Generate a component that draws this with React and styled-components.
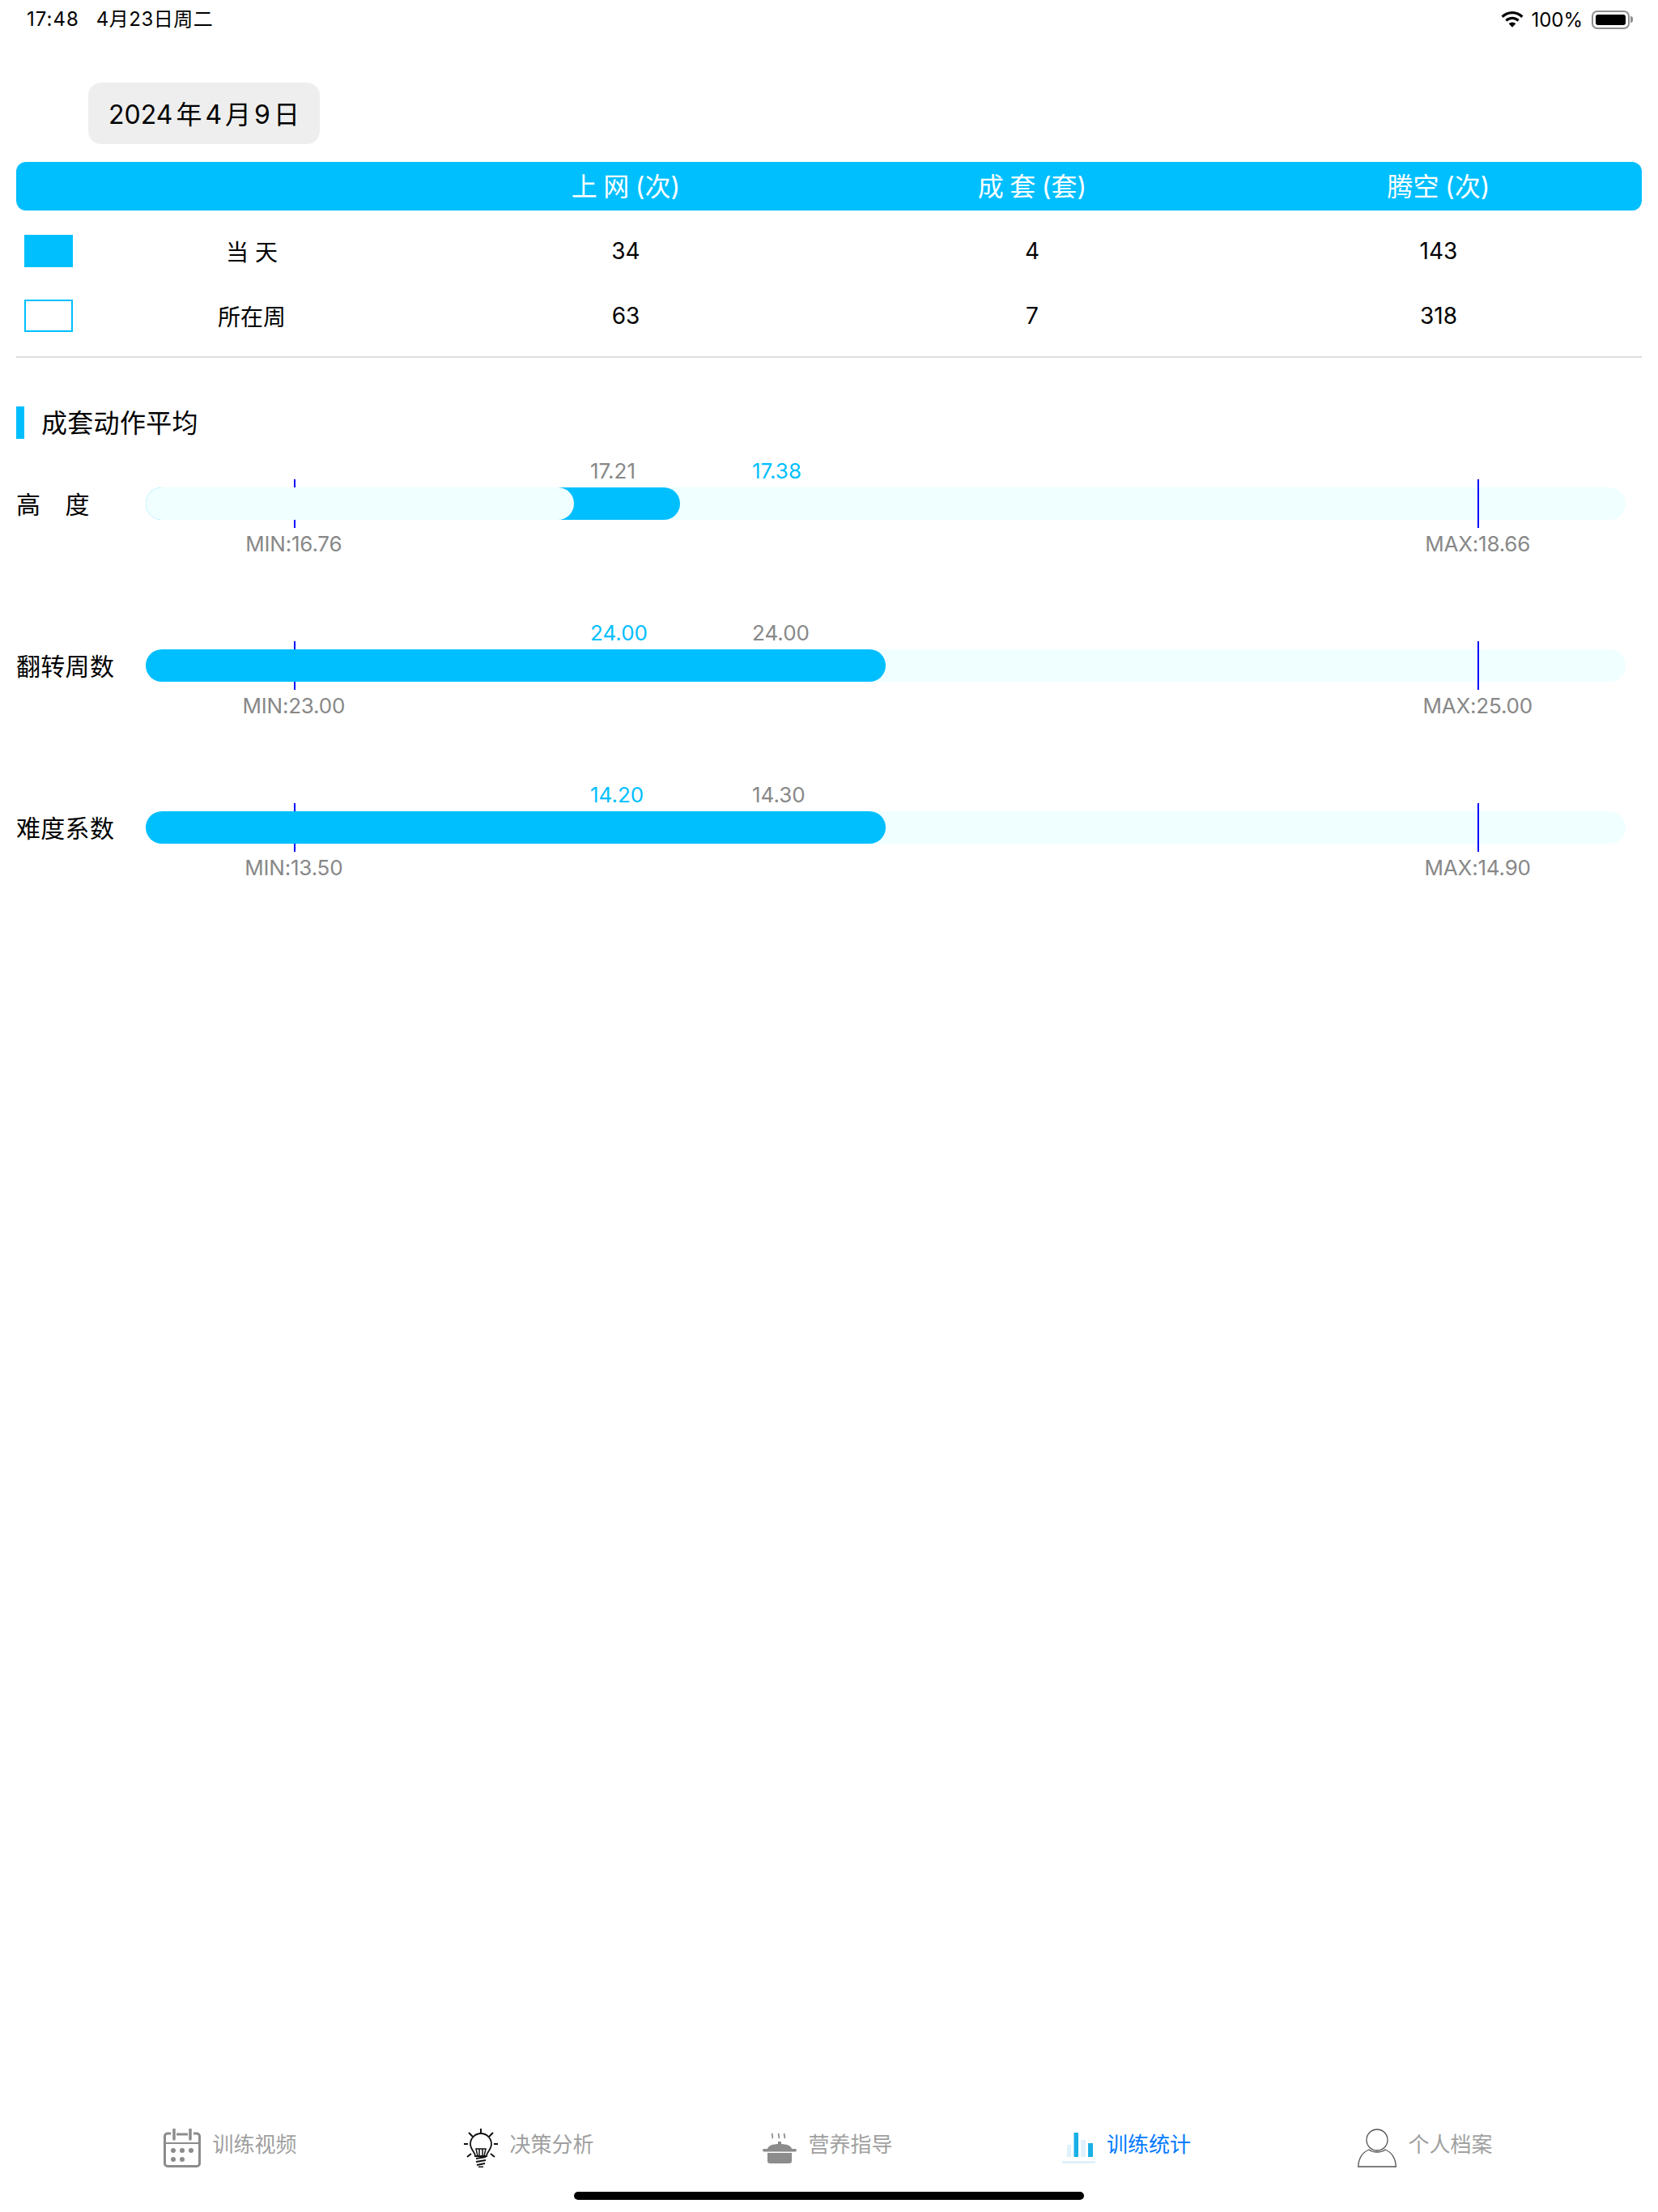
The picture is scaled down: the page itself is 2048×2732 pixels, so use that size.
import React from 'react'
import styled, { createGlobalStyle } from 'styled-components'

const SKY = '#00BFFF'
const FONT = 'Inter, "Noto Sans CJK SC", sans-serif'

const stats = [
  { key: 'day', label: '当 天', values: ['34', '4', '143'], filled: true },
  { key: 'week', label: '所在周', values: ['63', '7', '318'], filled: false },
]

const metrics = [
  { name: '高　度', day: 17.38, week: 17.21, min: 16.76, max: 18.66 },
  { name: '翻转周数', day: 24, week: 24, min: 23, max: 25 },
  { name: '难度系数', day: 14.2, week: 14.3, min: 13.5, max: 14.9 },
]

// min sits at 10% of the track and max at 90%
const toPercent = (v, m) => ((v - m.min) / (m.max - m.min)) * 80 + 10

const CalendarIcon = () => (
  <svg width="46" height="48" viewBox="0 0 46 48" fill="none" stroke="#8c8c8c" strokeWidth="3">
    <path d="M9 6H5a3.500 3.500 0 0 0-3.500 3.500V43A3.500 3.500 0 0 0 5 46.500H41a3.500 3.500 0 0 0 3.500-3.500V9.500A3.500 3.500 0 0 0 41 6h-4" />
    <path d="M16 7h14" />
    <path d="M2 18h42" strokeWidth="2" />
    <path d="M13 1v12M33 1v12" strokeLinecap="round" strokeWidth="3.500" />
    <g fill="#8c8c8c" stroke="none">
      <circle cx="12" cy="27" r="3" />
      <circle cx="23" cy="27" r="3" />
      <circle cx="34" cy="27" r="3" />
      <circle cx="12" cy="38" r="3" />
      <circle cx="23" cy="38" r="3" />
    </g>
  </svg>
)

const BulbIcon = () => (
  <svg width="42" height="48" viewBox="0 0 42 48" fill="none" stroke="#111" strokeWidth="1.800">
    <path d="M21 0v6M0 19h5M37 19h5M6 5l5 5M36 5l-5 5M4 35l5-4M38 35l-5-4" strokeWidth="2" />
    <path d="M14 34c0-5-6-8-6-15a13 13 0 0 1 26 0c0 7-6 10-6 15z" />
    <path d="M17 34l-2-9h12l-2 9M19 25v9M23 25v9" strokeWidth="1.500" />
    <path d="M15 37l12-2M15 41l12-2M16 45l10-2M18 47.500h6" strokeWidth="2" />
  </svg>
)

const PotIcon = () => (
  <svg width="42" height="38" viewBox="0 0 42 38" fill="#8c8c8c">
    <path d="M12 1c-1.500 2 1.500 3 0 6M20 1c-1.500 2 1.500 3 0 6M27 1c-1.500 2 1.500 3 0 6" fill="none" stroke="#8c8c8c" strokeWidth="1.800" />
    <rect x="19" y="11" width="4" height="4" />
    <path d="M6 20c1-4 6-6 15-6s14 2 15 6z" />
    <rect x="0" y="20" width="42" height="3.500" rx="1.700" />
    <path d="M6 25h30v10a3 3 0 0 1-3 3H9a3 3 0 0 1-3-3z" />
  </svg>
)

const ChartIcon = () => (
  <svg width="41" height="38" viewBox="0 0 41 38">
    <rect x="6" y="15" width="5" height="15" fill="#dff1fa" />
    <rect x="14.500" y="0" width="5.500" height="30" fill="#1ab0e6" />
    <rect x="23" y="9" width="6" height="21" fill="#dff1fa" />
    <rect x="32" y="13" width="6" height="17" fill="#1ab0e6" />
    <rect x="0" y="35" width="41" height="3" fill="#dff1fa" />
  </svg>
)

const PersonIcon = () => (
  <svg width="48" height="48" viewBox="0 0 48 48" fill="none" stroke="#555" strokeWidth="1.300">
    <circle cx="24" cy="14" r="13" />
    <path d="M14 26C6 29 1 37 .7 47h46.600C47 37 42 29 34 26c-5 4-15 4-20 0z" />
  </svg>
)

const tabs = [
  { label: '训练视频', icon: <CalendarIcon /> },
  { label: '决策分析', icon: <BulbIcon /> },
  { label: '营养指导', icon: <PotIcon /> },
  { label: '训练统计', icon: <ChartIcon />, active: true },
  { label: '个人档案', icon: <PersonIcon /> },
]

const App = () => {
  return (
    <Page>
      <GlobalStyle />
      <StatusBar>
        <StatusLeft>
          <StatusTime>17:48</StatusTime>
          <StatusDate>4月23日周二</StatusDate>
        </StatusLeft>
        <StatusRight>
          <svg width="28" height="20" viewBox="0 0 28 20">
            <path d="M14 0C8.800 0 4 2.100.5 5.500l2.300 2.400C5.700 5.100 9.600 3.300 14 3.300s8.300 1.800 11.200 4.600l2.300-2.400C24 2.100 19.200 0 14 0z" />
            <path d="M14 6.800c-3.400 0-6.400 1.300-8.700 3.500l2.400 2.400c1.600-1.600 3.800-2.600 6.300-2.600s4.700 1 6.300 2.600l2.400-2.400c-2.300-2.200-5.300-3.500-8.700-3.500z" />
            <path d="M14 13.500c-1.700 0-3.200.7-4.300 1.800L14 19.700l4.300-4.400c-1.100-1.100-2.600-1.800-4.300-1.800z" />
          </svg>
          <span>100%</span>
          <Battery>
            <BatteryLevel />
          </Battery>
        </StatusRight>
      </StatusBar>

      <DatePill>2024 年 4 月 9 日</DatePill>

      <StatsTable>
        <HeaderRow>
          <span />
          <span />
          <HeaderCell>上 网 (次)</HeaderCell>
          <HeaderCell>成 套 (套)</HeaderCell>
          <HeaderCell>腾空 (次)</HeaderCell>
        </HeaderRow>
        {stats.map((row) => (
          <StatRow key={row.key}>
            <Swatch $filled={row.filled} />
            <StatCell>{row.label}</StatCell>
            {row.values.map((v, i) => (
              <StatCell key={i}>{v}</StatCell>
            ))}
          </StatRow>
        ))}
      </StatsTable>

      <SectionTitle>成套动作平均</SectionTitle>

      <Metrics>
        {metrics.map((m) => {
          const ordered = m.day > m.week
            ? [{ v: m.week, blue: false }, { v: m.day, blue: true }]
            : [{ v: m.day, blue: true }, { v: m.week, blue: false }]
          return (
            <MetricRow key={m.name}>
              <MetricName>{m.name}</MetricName>
              <Track>
                <Tick $place={10} $under />
                <Fill $blue style={{ width: `${toPercent(m.day, m)}%` }} />
                {m.day > m.week && <Fill style={{ width: `${toPercent(m.week, m)}%` }} />}
                <Tick $place={90} />
                <Value $slot={0} $blue={ordered[0].blue}>{ordered[0].v.toFixed(2)}</Value>
                <Value $slot={1} $blue={ordered[1].blue}>{ordered[1].v.toFixed(2)}</Value>
                <Limit $place={10}>MIN:{m.min.toFixed(2)}</Limit>
                <Limit $place={90}>MAX:{m.max.toFixed(2)}</Limit>
              </Track>
            </MetricRow>
          )
        })}
      </Metrics>

      <TabBar>
        {tabs.map((t) => (
          <Tab key={t.label} $active={t.active}>
            {t.icon}
            <TabLabel>{t.label}</TabLabel>
          </Tab>
        ))}
      </TabBar>
      <HomeIndicator />
    </Page>
  )
}

const GlobalStyle = createGlobalStyle`
  * { box-sizing: border-box; }
  body {
    margin: 0;
    background: #fff;
    font-family: ${FONT};
    color: #000;
  }
`
const Page = styled.div`
  width: 2048px;
  height: 2732px;
  display: flex;
  flex-direction: column;
  overflow: hidden;
`
const StatusBar = styled.div`
  height: 48px;
  padding: 0 35px 0 33px;
  display: flex;
  align-items: center;
  justify-content: space-between;
  font-size: 24px;
`
const StatusLeft = styled.div`
  display: flex;
  align-items: baseline;
  gap: 21px;
  margin-bottom: 5px;
`
const StatusTime = styled.span`
  letter-spacing: 1px;
`
const StatusDate = styled.span`
  letter-spacing: 0.5px;
`
const StatusRight = styled.div`
  display: flex;
  align-items: center;
  gap: 9px;
`
const Battery = styled.div`
  width: 47px;
  height: 23px;
  padding: 3px;
  margin-left: 2px;
  border: 2px solid #8e8e8e;
  border-radius: 7px;
  display: flex;
  position: relative;
  &::after {
    content: '';
    position: absolute;
    right: -6px;
    top: 5px;
    width: 3px;
    height: 8px;
    background: #8e8e8e;
    border-radius: 0 3px 3px 0;
  }
`
const BatteryLevel = styled.div`
  flex: 1;
  background: #000;
  border-radius: 3px;
`
const DatePill = styled.div`
  width: 286px;
  height: 76px;
  margin: 54px 0 0 109px;
  padding-bottom: 2px;
  background: #eee;
  border-radius: 16px;
  display: flex;
  align-items: center;
  justify-content: center;
  font-size: 32px;
  word-spacing: -5px;
  white-space: nowrap;
`
const StatsTable = styled.div`
  margin: 22px 20px 0;
  padding-bottom: 10px;
  border-bottom: 2px solid #ddd;
`
const HeaderRow = styled.div`
  height: 60px;
  margin-bottom: 10px;
  display: grid;
  grid-template-columns: 80px 422px repeat(3, 502px);
  align-items: center;
  background: ${SKY};
  border-radius: 12px;
`
const HeaderCell = styled.div`
  padding-bottom: 4px;
  text-align: center;
  font-size: 32px;
  word-spacing: -1.5px;
  color: #fff;
`
const StatRow = styled.div`
  height: 80px;
  display: grid;
  grid-template-columns: 80px 422px repeat(3, 502px);
  align-items: center;
`
const Swatch = styled.div`
  width: 60px;
  height: 40px;
  margin-left: 10px;
  border: 2px solid ${SKY};
  background: ${(p) => (p.$filled ? SKY : '#fff')};
`
const StatCell = styled.div`
  text-align: center;
  font-size: 28px;
`
const SectionTitle = styled.div`
  height: 40px;
  margin: 60px 20px 0;
  padding: 0 0 4px 21px;
  border-left: 10px solid ${SKY};
  display: flex;
  align-items: center;
  font-size: 32px;
  letter-spacing: 0.3px;
`
const Metrics = styled.div`
  margin-top: 20px;
  padding: 0 40px 0 20px;
  display: flex;
  flex-direction: column;
  gap: 80px;
`
const MetricRow = styled.div`
  height: 120px;
  display: flex;
  align-items: center;
`
const MetricName = styled.div`
  width: 160px;
  padding-bottom: 2px;
  font-size: 30px;
  letter-spacing: 0.3px;
`
const Track = styled.div`
  flex: 1;
  height: 40px;
  position: relative;
  background: #f0ffff;
  border-radius: 20px;
`
const Fill = styled.div`
  position: absolute;
  left: 0;
  top: 0;
  height: 40px;
  border-radius: 20px;
  background: ${(p) => (p.$blue ? SKY : '#f0ffff')};
`
const Tick = styled.div`
  position: absolute;
  left: ${(p) => p.$place}%;
  top: -10px;
  width: 2px;
  height: 60px;
  background: #0000ff;
  z-index: ${(p) => (p.$under ? -1 : 1)};
`
const Value = styled.div`
  position: absolute;
  left: ${(p) => 549 + p.$slot * 200}px;
  top: -35px;
  line-height: 30px;
  font-size: 26px;
  color: ${(p) => (p.$blue ? SKY : '#888')};
`
const Limit = styled.div`
  position: absolute;
  left: ${(p) => p.$place}%;
  top: 55px;
  transform: translateX(-50%);
  line-height: 30px;
  font-size: 26px;
  letter-spacing: -0.2px;
  color: #888;
  white-space: nowrap;
`
const TabBar = styled.div`
  margin-top: auto;
  padding-left: 100px;
  height: 60px;
  display: grid;
  grid-template-columns: repeat(5, 369px);
`
const Tab = styled.div`
  display: flex;
  align-items: center;
  justify-content: center;
  gap: 14px;
  font-size: 26px;
  color: ${(p) => (p.$active ? '#007AFF' : '#a0a0a0')};
`
const TabLabel = styled.span`
  margin-bottom: 14px;
`
const HomeIndicator = styled.div`
  width: 630px;
  height: 10px;
  margin: 24px auto 15px;
  background: #000;
  border-radius: 5px;
`
export default App
